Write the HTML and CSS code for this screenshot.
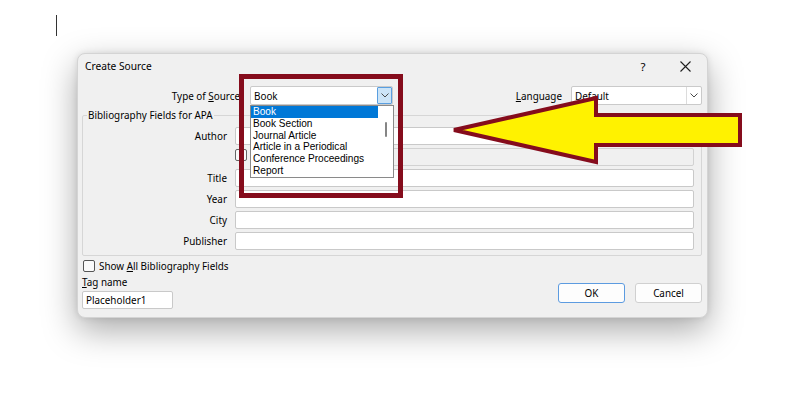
FILE: index.html
```html
<!DOCTYPE html>
<html>
<head>
<meta charset="utf-8">
<link rel="stylesheet" href="styles.css">
</head>
<body>
<div class="caret"></div>
<div class="dialog">
  <div class="titlebar">
    <span class="title">Create Source</span>
    <span class="help">?</span>
    <svg class="close" width="11" height="11" viewBox="0 0 11 11"><path d="M0.5 0.5 L10.5 10.5 M10.5 0.5 L0.5 10.5" stroke="#1f1f1f" stroke-width="1.1" fill="none"/></svg>
  </div>
  <div class="content">
    <div class="toprow">
      <label class="type-label">Type of <u>S</u>ource</label>
      <div class="combo combo-type">
        <span class="combo-text">Book</span>
        <span class="combo-btn focused"><svg width="8" height="5" viewBox="0 0 8 5"><path d="M0.5 0.5 L4 4 L7.5 0.5" stroke="#4a4a4a" stroke-width="1" fill="none"/></svg></span>
        <div class="dropdown">
          <ul class="items">
            <li class="selected">Book</li>
            <li>Book Section</li>
            <li>Journal Article</li>
            <li>Article in a Periodical</li>
            <li>Conference Proceedings</li>
            <li>Report</li>
          </ul>
          <div class="scroll"><div class="thumb"></div></div>
        </div>
      </div>
      <label class="lang-label"><u>L</u>anguage</label>
      <div class="combo combo-lang">
        <span class="combo-text">Default</span>
        <span class="combo-btn"><svg width="8" height="5" viewBox="0 0 8 5"><path d="M0.5 0.5 L4 4 L7.5 0.5" stroke="#4a4a4a" stroke-width="1" fill="none"/></svg></span>
      </div>
    </div>
    <fieldset class="group">
      <legend>Bibliography Fields for APA</legend>
      <div class="fields">
        <span class="flabel">Author</span>
        <div class="input"></div>
        <span class="flabel"></span>
        <div class="corp">
          <span class="chk small"></span>
          <div class="input disabled"></div>
        </div>
        <span class="flabel">Title</span>
        <div class="input"></div>
        <span class="flabel">Year</span>
        <div class="input"></div>
        <span class="flabel">City</span>
        <div class="input"></div>
        <span class="flabel">Publisher</span>
        <div class="input"></div>
      </div>
    </fieldset>
    <div class="bottom">
      <div class="left">
        <div class="showall"><span class="chk"></span><span>Show <u>A</u>ll Bibliography Fields</span></div>
        <div class="taglabel"><u>T</u>ag name</div>
        <div class="input tag">Placeholder1</div>
      </div>
      <div class="buttons">
        <button class="btn ok">OK</button>
        <button class="btn">Cancel</button>
      </div>
    </div>
  </div>
</div>
<svg class="annot" width="800" height="397" viewBox="0 0 800 397">
  <rect x="241.5" y="76.5" width="159" height="119" fill="none" stroke="#850c1c" stroke-width="5"/>
  <polygon points="454,130 596,98 596,115 740,115 740,145 596,145 596,162" fill="#fff200" stroke="#850c1c" stroke-width="4" stroke-linejoin="miter"/>
</svg>
</body>
</html>
```
FILE: styles.css
```css
* { box-sizing: border-box; }
html, body { margin: 0; padding: 0; }
body {
  width: 800px;
  height: 397px;
  background: #ffffff;
  overflow: hidden;
  position: relative;
  font-family: "Noto Sans", "Open Sans", sans-serif;
  font-size: 9.9px;
  color: #000;
}
u { text-decoration: underline; text-underline-offset: 1px; }
.caret {
  width: 1px;
  height: 21px;
  background: #333;
  margin: 15px 0 0 56px;
}
.dialog {
  margin: 17px 0 0 77px;
  width: 631px;
  background: #f0f0f0;
  border: 1px solid #d4d4d4;
  border-radius: 8px;
  box-shadow: 0 12px 34px rgba(0,0,0,0.34), 0 0 6px rgba(0,0,0,0.10);
}
.titlebar {
  height: 26px;
  display: flex;
  align-items: center;
  padding: 0 0 2px 7px;
}
.title { font-size: 10.2px; flex: 1; }
.help { font-size: 11.5px; width: 10px; text-align: center; margin-right: 32px; }
.close { margin-right: 16px; }
.content { padding: 0 5px 8px 4px; }
.toprow {
  display: flex;
  align-items: center;
  height: 19px;
  margin-top: 6px;
}
.type-label { width: 158px; text-align: right; margin-right: 10px; }
.combo {
  position: relative;
  height: 19px;
  background: #fff;
  border: 1px solid #cacaca;
  border-radius: 2px;
  display: flex;
  align-items: center;
}
.combo-type { width: 143px; }
.combo-lang { width: 131px; }
.lang-label { margin-left: auto; margin-right: 9px; }
.combo-text { flex: 1; padding-left: 3px; }
.combo-btn {
  width: 15px;
  height: 17px;
  display: flex;
  align-items: center;
  justify-content: center;
  border-left: 1px solid #dcdcdc;
}
.combo-btn.focused {
  background: #cce4f7;
  border: 1px solid #5a9fe0;
  border-radius: 1px;
}
.dropdown {
  position: absolute;
  top: 18px;
  left: -1px;
  width: 144px;
  height: 73px;
  background: #fff;
  border: 1px solid #8a8a8a;
  display: flex;
  z-index: 5;
}
.items {
  list-style: none;
  margin: 0;
  padding: 0;
  flex: 1;
}
.items li {
  height: 11.75px;
  line-height: 11.75px;
  padding-left: 2px;
  white-space: nowrap;
  color: #000;
  font-family: "Liberation Sans", Arial, sans-serif;
  font-size: 10.1px;
}
.items li.selected { background: #0078d7; color: #fff; }
.scroll { width: 15px; position: relative; }
.thumb {
  position: absolute;
  left: 7px;
  top: 16px;
  width: 2px;
  height: 15px;
  background: #858585;
  border-radius: 1px;
}
.group {
  margin: 3px 0 0 0;
  padding: 5px 7px 5px 0;
  border: 1px solid #d6d6d6;
  border-radius: 2px;
  min-width: 0;
}
.group legend {
  margin-left: 4px;
  padding: 0 1px;
  line-height: 14px;
  font-size: 9.9px;
}
.fields {
  display: grid;
  grid-template-columns: 144px 1fr;
  grid-auto-rows: 18px;
  column-gap: 8px;
  row-gap: 3px;
}
.flabel { text-align: right; align-self: center; }
.input {
  height: 18px;
  background: #fff;
  border: 1px solid #c9c9c9;
  border-radius: 2px;
}
.input.disabled { background: #f0f0f0; border-color: #d2d2d2; flex: 1; margin-left: 3px; }
.corp { display: flex; align-items: flex-start; }
.chk {
  display: inline-block;
  width: 12px;
  height: 12px;
  border: 1px solid #555;
  border-radius: 2px;
  background: #fafafa;
}
.chk.small { margin-top: 1px; border-color: #666; }
.bottom {
  display: flex;
  justify-content: space-between;
  align-items: flex-end;
}
.showall {
  display: flex;
  align-items: center;
  gap: 4px;
  height: 14px;
  margin-top: 3px;
  margin-left: 1px;
}
.taglabel { height: 14px; line-height: 14px; margin-top: 2px; }
.input.tag {
  width: 91px;
  margin-top: 2px;
  padding-left: 3px;
  line-height: 16px;
}
.buttons { display: flex; gap: 10px; margin-bottom: 6px; }
.btn {
  width: 67px;
  height: 20px;
  font-family: inherit;
  font-size: 9.9px;
  color: #000;
  background: #fdfdfd;
  border: 1px solid #d0d0d0;
  border-radius: 3px;
  padding: 0;
}
.btn.ok { border: 1.5px solid #5c9be0; }
.annot { position: absolute; left: 0; top: 0; pointer-events: none; }
```
